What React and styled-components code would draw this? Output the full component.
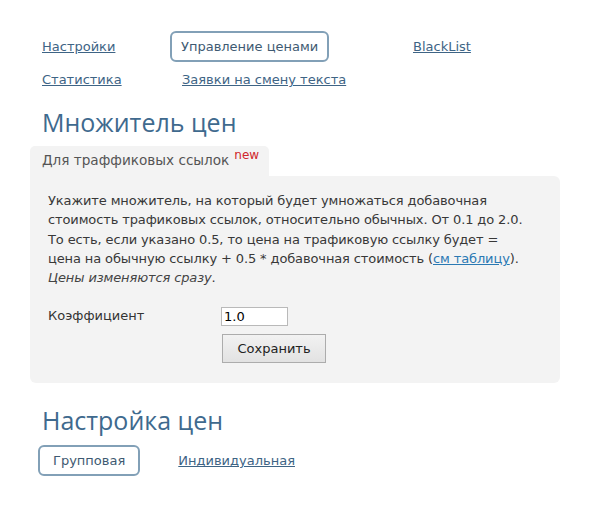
import React from 'react';
import styled, { createGlobalStyle } from 'styled-components';

const GlobalStyle = createGlobalStyle`
  body {
    margin: 0;
    background: #fff;
    font-family: "DejaVu Sans", Verdana, sans-serif;
    font-size: 13px;
    color: #333;
  }
`

const Page = styled.div`
  width: 600px;
  height: 527px;
  padding: 31px 0 0 30px;
  box-sizing: border-box;
`

const Menu = styled.div`
  display: grid;
  grid-template-columns: 140px 231px auto;
  row-gap: 2px;
  align-items: center;
`

const MenuLink = styled.a`
  display: inline-block;
  justify-self: start;
  padding: 7px 12px;
  height: 17px;
  line-height: 17px;
  white-space: nowrap;
  color: #3e6485;
  text-decoration: underline;
  border-radius: 6px;
  ${p => p.$active && `
    border: 2px solid #82a0b7;
    padding: 5px ${p.$px || 10}px;
    text-decoration: none;
    color: #3e5a72;
  `}
`

const Title = styled.h2`
  margin: ${p => p.$gap}px 0 0 12px;
  font-family: "Open Sans", sans-serif;
  font-weight: 400;
  font-size: 25px;
  line-height: 34px;
  color: #3f6a8e;
`

const Tab = styled.div`
  display: inline-flex;
  align-items: flex-start;
  margin-top: 7px;
  padding: 6px 10px 0 12px;
  height: 24px;
  background: #f3f3f3;
  border-radius: 5px 5px 0 0;
  color: #555;
  font-size: 13.6px;
  line-height: 17px;
`

const NewMark = styled.sup`
  color: #d0262b;
  font-size: 12px;
  line-height: 11px;
  margin-left: 5px;
  position: relative;
  top: -2px;
  vertical-align: top;
`

const Panel = styled.div`
  width: 530px;
  box-sizing: border-box;
  background: #f3f3f3;
  border-radius: 0 6px 6px 6px;
  padding: 15px 18px 20px 18px;
`

const Intro = styled.p`
  margin: 0;
  line-height: 19.3px;
  color: #383838;
  letter-spacing: -0.12px;
  white-space: nowrap;
  a { color: #2a79b3; }
  em { color: #444; }
`

const FormRow = styled.div`
  display: grid;
  grid-template-columns: 173px auto;
  row-gap: 8px;
  margin-top: 20px;
`

const Label = styled.label`
  line-height: 17px;
  color: #333;
`

const Input = styled.input`
  width: 67px;
  height: 19px;
  box-sizing: border-box;
  border: 1px solid #b9b9b9;
  padding: 0 2px;
  font-family: "DejaVu Sans", Verdana, sans-serif;
  font-size: 13px;
  color: #000;
  background: #fff;
`

const Button = styled.button`
  grid-column: 2;
  width: 104px;
  height: 29px;
  margin-left: 1px;
  border: 1px solid #acacac;
  background: linear-gradient(#f2f2f2, #e2e2e2);
  font-family: "DejaVu Sans", Verdana, sans-serif;
  font-size: 13px;
  color: #222;
`

const SubMenu = styled.div`
  display: flex;
  align-items: center;
  gap: 26px;
  margin: 8px 0 0 8px;
`

export default function App() {
  return (
    <Page>
      <GlobalStyle />
      <Menu>
        <MenuLink href="#">Настройки</MenuLink>
        <MenuLink href="#" $active $px={9}>Управление ценами</MenuLink>
        <MenuLink href="#">BlackList</MenuLink>
        <MenuLink href="#">Статистика</MenuLink>
        <MenuLink href="#">Заявки на смену текста</MenuLink>
      </Menu>
      <Title $gap={10}>Множитель цен</Title>
      <Tab>Для траффиковых ссылок<NewMark>new</NewMark></Tab>
      <Panel>
        <Intro>
          Укажите множитель, на который будет умножаться добавочная<br />
          стоимость трафиковых ссылок, относительно обычных. От 0.1 до 2.0.<br />
          То есть, если указано 0.5, то цена на трафиковую ссылку будет =<br />
          цена на обычную ссылку + 0.5 * добавочная стоимость (<a href="#">см таблицу</a>).<br />
          <em>Цены изменяются сразу</em>.
        </Intro>
        <FormRow>
          <Label>Коэффициент</Label>
          <Input defaultValue="1.0" />
          <Button>Сохранить</Button>
        </FormRow>
      </Panel>
      <Title $gap={20}>Настройка цен</Title>
      <SubMenu>
        <MenuLink href="#" $active $px={13}>Групповая</MenuLink>
        <MenuLink href="#">Индивидуальная</MenuLink>
      </SubMenu>
    </Page>
  );
}
